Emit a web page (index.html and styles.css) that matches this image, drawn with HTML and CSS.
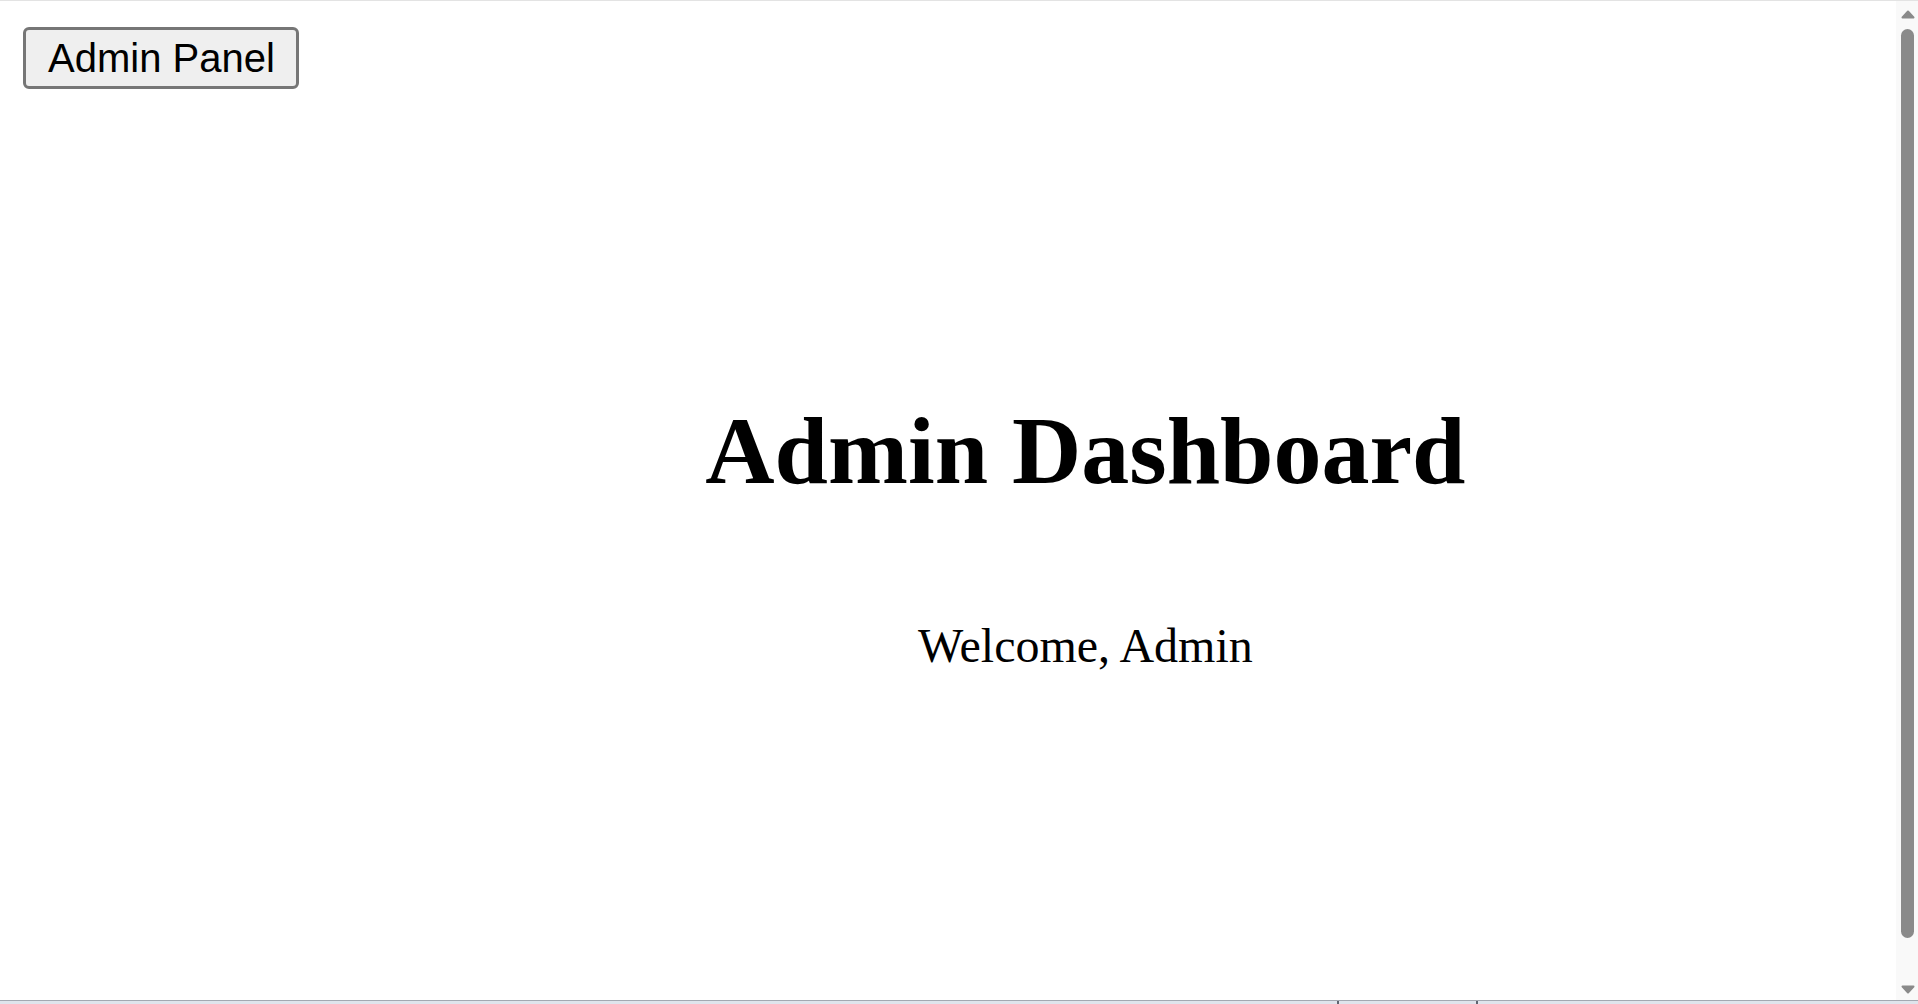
FILE: index.html
```html
<!DOCTYPE html>
<html lang="en">
<head>
<meta charset="utf-8">
<title>Admin Dashboard</title>
<link rel="stylesheet" href="styles.css">
</head>
<body>
<div class="layout">
  <button class="panel-btn" type="button">Admin Panel</button>
  <main class="main">
    <h1 class="title">Admin Dashboard</h1>
    <p class="welcome">Welcome, Admin</p>
  </main>
</div>
<div class="scrollbar" aria-hidden="true">
  <svg class="sb-arrow sb-up" width="14" height="9" viewBox="0 0 14 9"><polygon points="7,1.5 12.5,7.5 1.5,7.5" fill="#8a8a8a" stroke="#8a8a8a" stroke-width="2" stroke-linejoin="round"/></svg>
  <div class="sb-thumb"></div>
  <svg class="sb-arrow sb-down" width="14" height="9" viewBox="0 0 14 9"><polygon points="1.5,1.5 12.5,1.5 7,7.5" fill="#8a8a8a" stroke="#8a8a8a" stroke-width="2" stroke-linejoin="round"/></svg>
</div>
<div class="chrome-top"></div>
<div class="taskbar-edge">
  <span class="tick tick-a"></span>
  <span class="tick tick-b"></span>
</div>
</body>
</html>
```

FILE: styles.css
```css
html, body {
  margin: 0;
  padding: 0;
  background: #ffffff;
}

body {
  font-family: "Liberation Serif", "Times New Roman", serif;
  color: #000000;
}

.layout {
  display: flex;
  align-items: flex-start;
  min-height: 100vh;
  padding: 24px 46px 24px 24px;
}

.panel-btn {
  margin: 3px 0 0 -1px;
  flex: none;
  font-family: "Liberation Sans", Arial, sans-serif;
  font-size: 40px;
  line-height: 46px;
  color: #000000;
  background: #efefef;
  border: 3px solid #767676;
  border-radius: 6px;
  padding: 5px 21px 5px 22px;
  cursor: default;
}

.main {
  flex: 1;
  align-self: stretch;
  display: flex;
  flex-direction: column;
  justify-content: center;
  align-items: center;
  text-align: center;
}

.title {
  font-size: 96px;
  font-weight: bold;
  margin: 64.32px 0;
}

.welcome {
  font-size: 48px;
  margin: 48px 0;
}

.scrollbar {
  position: fixed;
  top: 1px;
  right: 0;
  width: 22px;
  height: 999px;
  background: #f9f9f9;
  display: flex;
  flex-direction: column;
  align-items: center;
  padding-left: 1px;
  box-sizing: border-box;
}

.sb-arrow {
  display: block;
  flex: none;
}

.sb-up {
  margin-top: 9px;
}

.sb-thumb {
  margin-top: 10px;
  width: 13px;
  height: 909px;
  background: #8a8a8a;
  border-radius: 7px;
  flex: none;
}

.sb-down {
  margin-top: auto;
  margin-bottom: 6px;
}

.chrome-top {
  position: fixed;
  top: 0;
  left: 0;
  right: 0;
  height: 1px;
  background: #e3e3e3;
}

.taskbar-edge {
  position: fixed;
  left: 0;
  right: 0;
  bottom: 0;
  height: 3px;
  background: #dfe4ec;
  border-top: 1px solid #a3a8b1;
}

.tick {
  position: absolute;
  top: 0;
  width: 2px;
  height: 3px;
  background: #5e6470;
}

.tick-a { left: 1337px; }
.tick-b { left: 1476px; }
```
